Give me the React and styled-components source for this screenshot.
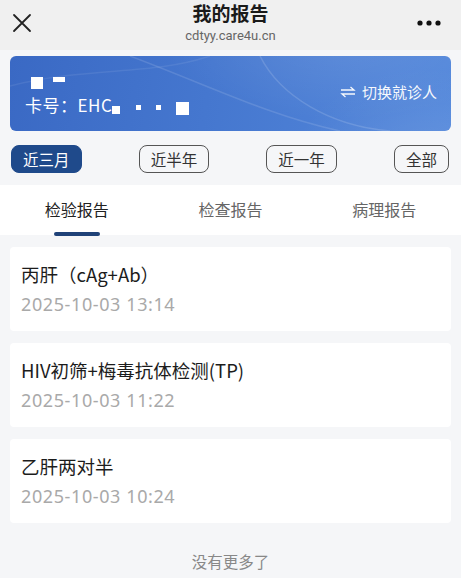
import React from 'react';
import styled, { createGlobalStyle } from 'styled-components';

const GlobalStyle = createGlobalStyle`
  html, body {
    margin: 0;
    padding: 0;
    background: #f5f6f8;
    font-family: "Noto Sans CJK SC", "Noto Sans", sans-serif;
  }
`;

const Page = styled.div`
  width: 461px;
  height: 578px;
  overflow: hidden;
  background: #f5f6f8;
  display: flex;
  flex-direction: column;
`;

const NavBar = styled.div`
  height: 50px;
  background: #f0f0f0;
  display: grid;
  grid-template-columns: 60px 1fr 60px;
  align-items: center;
`;

const NavTitle = styled.div`
  align-self: start;
  padding-top: 3px;
  display: flex;
  flex-direction: column;
  align-items: center;
  line-height: 1;
`;

const Title = styled.div`
  font-size: 19px;
  font-weight: 700;
  color: #1a1a1a;
`;

const Url = styled.div`
  font-size: 13px;
  color: #666;
  margin-top: 7px;
  font-family: "Roboto", "Noto Sans", sans-serif;
`;

const IconButton = styled.div`
  display: flex;
  justify-content: ${(p) => (p.right ? 'flex-end' : 'flex-start')};
  padding: ${(p) => (p.right ? '0 20px 0 0' : '0 0 0 12px')};
  margin-top: -4px;
`;

const Content = styled.div`
  padding: 6px 10px 0;
  display: flex;
  flex-direction: column;
`;

const PatientCard = styled.div`
  position: relative;
  height: 75px;
  border-radius: 6px;
  overflow: hidden;
  background:
    radial-gradient(ellipse 260px 120px at 330px -20px, rgba(255,255,255,0.10), transparent 70%),
    radial-gradient(ellipse 200px 140px at 420px 110px, rgba(255,255,255,0.10), transparent 70%),
    linear-gradient(100deg, #3a69c4 0%, #4577cf 45%, #5488db 100%);
  display: flex;
  align-items: center;
  justify-content: space-between;
  padding: 0 14px 0 15px;
  color: #fff;
`;

const Waves = styled.svg`
  position: absolute;
  inset: 0;
  pointer-events: none;
`;

const CardInfo = styled.div`
  position: relative;
  display: flex;
  flex-direction: column;
  gap: 6px;
  margin-top: 4px;
`;

const Redact = styled.span`
  display: inline-block;
  width: ${(p) => p.w}px;
  height: ${(p) => p.h}px;
  background: #fff;
  margin-left: ${(p) => p.ml || 0}px;
  vertical-align: ${(p) => p.va || 0}px;
`;

const NameRow = styled.div`
  height: 12px;
  display: flex;
  align-items: flex-start;
  padding-left: 6px;
`;

const CardNo = styled.div`
  font-size: 17px;
  line-height: 20px;
  letter-spacing: 0.5px;
`;

const Switch = styled.div`
  position: relative;
  font-size: 15px;
  display: flex;
  align-items: center;
  gap: 6px;
  margin-top: -4px;
  opacity: 0.95;
`;

const Filters = styled.div`
  display: flex;
  justify-content: space-between;
  padding: 14px 2px 12px 1px;
`;

const FilterButton = styled.div`
  height: 28px;
  box-sizing: border-box;
  padding: 0 11px;
  border-radius: 8px;
  display: flex;
  align-items: center;
  font-size: 15.5px;
  color: ${(p) => (p.active ? '#fff' : '#333')};
  background: ${(p) => (p.active ? '#1f4a8b' : 'transparent')};
  border: 1px solid ${(p) => (p.active ? '#1f4a8b' : '#555')};
`;

const Tabs = styled.div`
  background: #fff;
  height: 50px;
  margin: 0 -10px;
  display: grid;
  grid-template-columns: repeat(3, 1fr);
`;

const Tab = styled.div`
  position: relative;
  display: flex;
  justify-content: center;
  align-items: center;
  font-size: 16px;
  color: ${(p) => (p.active ? '#222' : '#666')};
  padding-bottom: 2px;

  &::after {
    content: '';
    display: ${(p) => (p.active ? 'block' : 'none')};
    position: absolute;
    bottom: -1px;
    left: 50%;
    transform: translateX(-50%);
    width: 46px;
    height: 4px;
    border-radius: 2px;
    background: #1f4278;
  }
`;

const List = styled.div`
  display: flex;
  flex-direction: column;
  gap: 12px;
  padding-top: 12px;
`;

const ReportCard = styled.div`
  background: #fff;
  border-radius: 4px;
  height: 84px;
  box-sizing: border-box;
  padding: 14px 11px 0;
`;

const ReportName = styled.div`
  font-size: 18.5px;
  color: #1c1c1c;
  line-height: 26px;
`;

const ReportDate = styled.div`
  font-size: 18px;
  color: #a9a9a9;
  line-height: 24px;
  margin-top: 5px;
  letter-spacing: 0.6px;
  font-family: "Noto Sans", "Roboto", sans-serif;
`;

const Footer = styled.div`
  text-align: center;
  color: #888;
  font-size: 15.5px;
  padding-top: 27px;
`;

const reports = [
  { name: '丙肝（cAg+Ab）', date: '2025-10-03 13:14' },
  { name: 'HIV初筛+梅毒抗体检测(TP)', date: '2025-10-03 11:22' },
  { name: '乙肝两对半', date: '2025-10-03 10:24' },
];

const filters = ['近三月', '近半年', '近一年', '全部'];
const tabs = ['检验报告', '检查报告', '病理报告'];

export default function App() {
  return (
    <Page>
      <GlobalStyle />
      <NavBar>
        <IconButton>
          <svg width="20" height="20" viewBox="0 0 20 20">
            <path d="M2 2 L18 18 M18 2 L2 18" stroke="#222" strokeWidth="1.8" strokeLinecap="round" />
          </svg>
        </IconButton>
        <NavTitle>
          <Title>我的报告</Title>
          <Url>cdtyy.care4u.cn</Url>
        </NavTitle>
        <IconButton right>
          <svg width="24" height="6" viewBox="0 0 24 6">
            <circle cx="3" cy="3" r="2.6" fill="#111" />
            <circle cx="12" cy="3" r="2.6" fill="#111" />
            <circle cx="21" cy="3" r="2.6" fill="#111" />
          </svg>
        </IconButton>
      </NavBar>

      <Content>
        <PatientCard>
          <Waves width="439" height="75" viewBox="0 0 439 75">
            <path d="M120 0 C200 30 260 60 330 75" stroke="rgba(255,255,255,0.12)" strokeWidth="1.5" fill="none" />
            <path d="M250 0 C270 40 320 70 380 75" stroke="rgba(255,255,255,0.14)" strokeWidth="1.5" fill="none" />
            <path d="M0 30 C80 10 140 20 200 0" stroke="rgba(255,255,255,0.08)" strokeWidth="1.5" fill="none" />
          </Waves>
          <CardInfo>
            <NameRow>
              <Redact w={12} h={12} />
              <Redact w={12} h={5} ml={10} />
            </NameRow>
            <CardNo>
              卡号：EHC
              <Redact w={8} h={8} ml={0} va={-2} />
              <Redact w={5} h={5} ml={16} va={2} />
              <Redact w={5} h={5} ml={15} va={2} />
              <Redact w={13} h={13} ml={15} va={-3} />
            </CardNo>
          </CardInfo>
          <Switch>
            <svg width="16" height="12" viewBox="0 0 16 12">
              <path d="M1 4 H14 L10.5 1 M15 8 H2 L5.5 11" stroke="#fff" strokeWidth="1.3" fill="none" />
            </svg>
            切换就诊人
          </Switch>
        </PatientCard>

        <Filters>
          {filters.map((f, i) => (
            <FilterButton key={f} active={i === 0}>{f}</FilterButton>
          ))}
        </Filters>

        <Tabs>
          {tabs.map((t, i) => (
            <Tab key={t} active={i === 0}>{t}</Tab>
          ))}
        </Tabs>

        <List>
          {reports.map((r) => (
            <ReportCard key={r.date}>
              <ReportName>{r.name}</ReportName>
              <ReportDate>{r.date}</ReportDate>
            </ReportCard>
          ))}
        </List>

        <Footer>没有更多了</Footer>
      </Content>
    </Page>
  );
}
